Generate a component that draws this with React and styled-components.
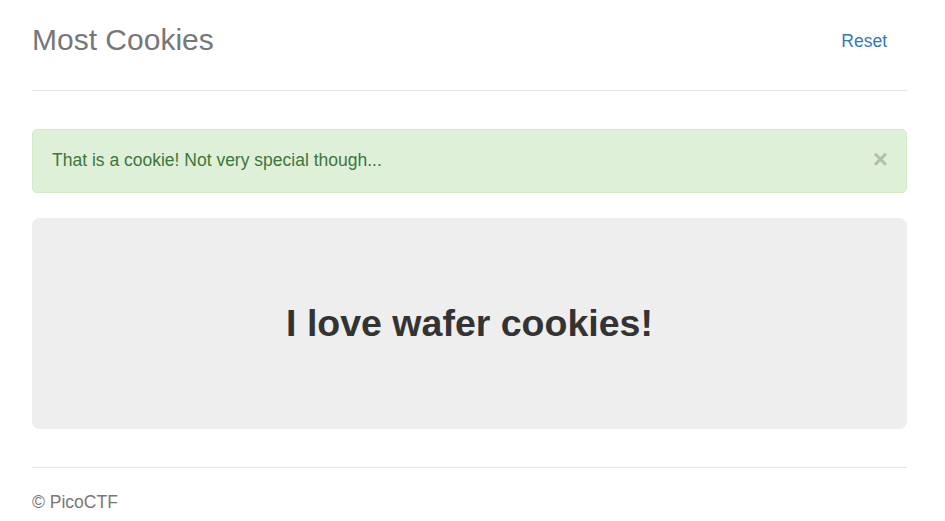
import React from "react";
import styled, { createGlobalStyle } from "styled-components";

const Global = createGlobalStyle`
  html, body { margin: 0; padding: 0; background: #fff; }
  body {
    font-family: "Liberation Sans", Arial, Helvetica, sans-serif;
    font-size: 17.5px;
    line-height: 25px;
    color: #333;
  }
  * { box-sizing: border-box; }
`;

const Page = styled.div`
  width: 945px;
  padding: 0 38px 0 32px;
`;

const Header = styled.header`
  height: 91px;
  border-bottom: 1px solid #e5e5e5;
  display: flex;
  justify-content: space-between;
  align-items: flex-start;
`;

const Title = styled.h3`
  margin: 23px 0 0;
  font-size: 30px;
  line-height: 33px;
  font-weight: 500;
  color: #777;
`;

const NavLink = styled.a`
  display: block;
  margin-top: 16px;
  padding: 12.5px 20px;
  line-height: 25px;
  color: #337ab7;
  text-decoration: none;
  border-radius: 5px;
`;

const Alert = styled.div`
  margin-top: 38px;
  margin-bottom: 25px;
  padding: 17px 18px 19px 19px;
  border: 1px solid #d6e9c6;
  border-radius: 5px;
  background: #dff0d8;
  color: #3c763d;
  display: flex;
  justify-content: space-between;
  align-items: center;
  height: 64px;
`;

const Close = styled.button`
  border: 0;
  background: transparent;
  padding: 0;
  font-family: "Liberation Sans", Arial, sans-serif;
  font-size: 26px;
  font-weight: 700;
  line-height: 1;
  color: #000;
  opacity: 0.2;
  margin-top: -3px;
  cursor: pointer;
`;

const Jumbotron = styled.div`
  height: 211px;
  border-radius: 7.5px;
  background: #eee;
  display: flex;
  align-items: center;
  justify-content: center;
`;

const Lead = styled.h2`
  margin: 0;
  font-size: 37.5px;
  line-height: 41px;
  font-weight: 700;
  color: #333;
`;

const Footer = styled.footer`
  margin-top: 38px;
  border-top: 1px solid #e5e5e5;
  padding-top: 22px;
  color: #777;
`;

export default function App() {
  return (
    <>
      <Global />
      <Page>
        <Header>
          <Title>Most Cookies</Title>
          <NavLink href="#">Reset</NavLink>
        </Header>
        <Alert>
          <span>That is a cookie! Not very special though...</span>
          <Close aria-label="Close">×</Close>
        </Alert>
        <Jumbotron>
          <Lead>I love wafer cookies!</Lead>
        </Jumbotron>
        <Footer>© PicoCTF</Footer>
      </Page>
    </>
  );
}
